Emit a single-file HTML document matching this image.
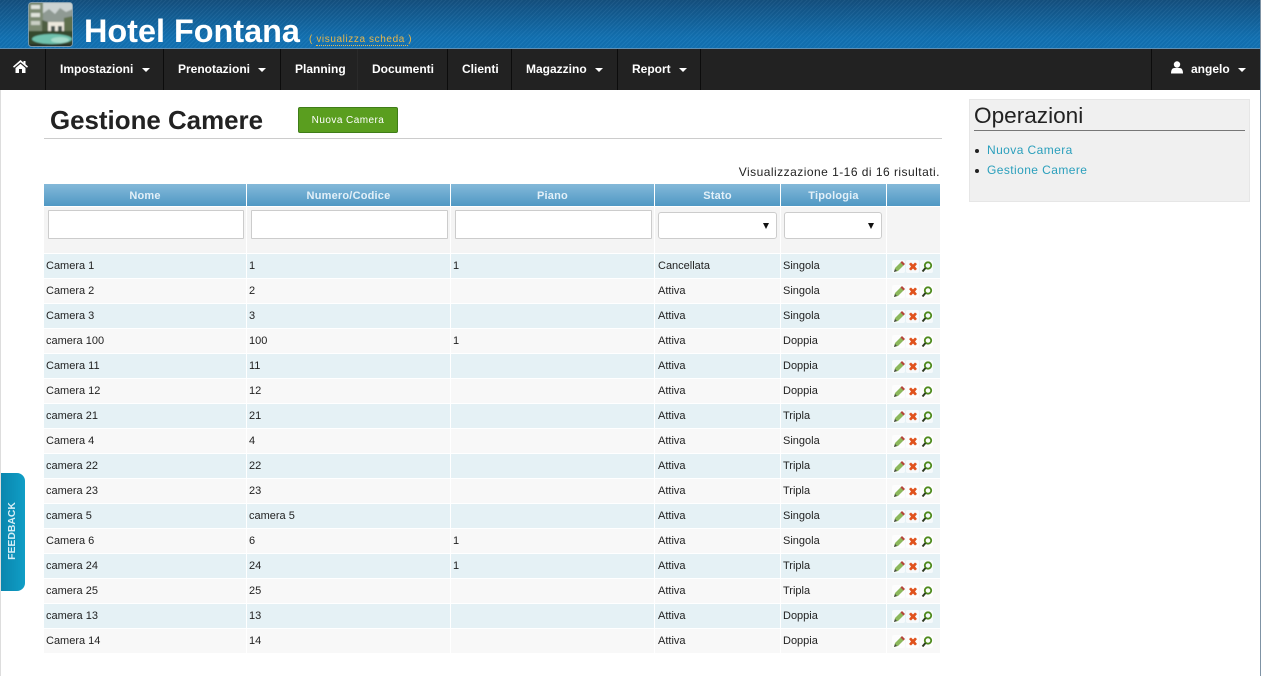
<!DOCTYPE html>
<html lang="it">
<head>
<meta charset="utf-8">
<title>Gestione Camere</title>
<style>
html,body{margin:0;padding:0;width:1263px;height:676px;overflow:hidden;background:#fff;font-family:"Liberation Sans",Arial,sans-serif;color:#222}
.abs{position:absolute}
#hdr{left:0;top:0;width:1260px;height:48px;background:linear-gradient(#14507f,#1272b4 80%,#1272b4);}
#hdr:after{content:"";position:absolute;left:0;top:0;right:0;bottom:0;background:repeating-linear-gradient(135deg,rgba(255,255,255,.045) 0 1px,rgba(0,0,0,.03) 1px 3px)}
#line{left:0;top:48px;width:1260px;height:1px;background:#5d8fb5}
#nav{left:0;top:49px;width:1260px;height:41px;background:#222}
.sep{position:absolute;top:0;width:1px;height:41px;background:#0c0c0c}
.ni{position:absolute;top:13px;font-size:12px;font-weight:bold;color:#fff;line-height:14px;white-space:nowrap}
.car{position:absolute;top:19px;width:0;height:0;border-left:4px solid transparent;border-right:4px solid transparent;border-top:4px solid #fff}
#title{left:84px;top:12px;font-size:32.4px;line-height:38px;font-weight:bold;color:#fff;white-space:nowrap;z-index:2}
#sub{left:309px;top:34px;font-size:10px;line-height:12px;color:#e8b64a;white-space:nowrap;letter-spacing:.6px;z-index:2}
#sub span{border-bottom:1px dotted #e8b64a}
#h1{left:50px;top:106px;font-size:25.9px;line-height:30px;font-weight:bold;color:#222;white-space:nowrap}
#btn{left:298px;top:107px;width:98px;height:24px;background:#5a9e1f;border:1px solid #3f7d18;border-radius:2px;color:#fff;font-size:10px;line-height:25px;text-align:center;letter-spacing:.45px}
#hr{left:44px;top:138px;width:898px;height:1px;background:#ccc}
#res{right:323px;top:165px;font-size:12px;line-height:15px;white-space:nowrap;letter-spacing:.47px}
table{position:absolute;left:43px;top:183px;border-collapse:separate;border-spacing:1px;table-layout:fixed;width:897px}
th{height:20px;padding:2px 0 0;background:linear-gradient(#84b9d9,#4f98c4);color:#e3f0f8;font-size:11px;line-height:20px;text-align:center;font-weight:bold;letter-spacing:.2px}
td{padding:0 0 0 2px;font-size:11px;line-height:24px;height:24px;white-space:nowrap;overflow:hidden}
td:nth-child(4){padding-left:3px}
tr.f td{height:46px;background:#f4f4f4;padding:0;position:relative}
tr.o td{background:#e5f1f5}
tr.e td{background:#f8f8f8}
.inp{position:absolute;left:4px;top:3px;height:27px;background:#fff;border:1px solid #ccc;border-radius:1px}
.sel{position:absolute;left:3px;top:5px;height:25px;background:#fff;border:1px solid #ccc;border-radius:3px}
.sel:after{content:"";position:absolute;right:7px;top:10px;border-left:3.5px solid transparent;border-right:3.5px solid transparent;border-top:6px solid #111}
td svg{display:block;margin:2px 0 0 3px}
#side{left:969px;top:99px;width:279px;height:101px;background:#f0f0f0;border:1px solid #e6e6e6}
#op{left:974px;top:102px;font-size:22.6px;line-height:27px;color:#222;white-space:nowrap}
#oph{left:974px;top:130px;width:271px;height:1px;background:#777}
.lnk{position:absolute;left:987px;font-size:12px;line-height:15px;color:#2a9fbc;white-space:nowrap;letter-spacing:.42px}
.dot{position:absolute;left:975px;width:4px;height:4px;border-radius:50%;background:#222}
#fb{left:1px;top:473px;width:24px;height:118px;background:linear-gradient(90deg,#0a86ae,#109ec6);border-radius:0 8px 8px 0}
#fbt{left:13px;top:531px;transform:translate(-50%,-50%) rotate(-90deg);font-size:10.4px;line-height:12px;font-weight:bold;color:#d6eef6;white-space:nowrap}
#bl{left:0;top:90px;width:1px;height:586px;background:#ddd}
#br{left:1260px;top:0;width:1px;height:676px;background:#7f93a5}
</style>
</head>
<body>
<svg width="0" height="0" style="position:absolute">
<symbol id="ic" viewBox="0 0 44 14">
<rect x="0" y="0" width="13" height="13" rx="2" fill="#fff" opacity=".65"/>
<path d="M2 12l1-4 6-6 3 3-6 6z" fill="#8cb85c"/><path d="M8.5 2.5l1.500-1.500 3 3-1.500 1.500z" fill="#b5443a"/><path d="M2 12l1-3 2 2z" fill="#444"/>
<rect x="14" y="0" width="13" height="13" rx="2" fill="#fff" opacity=".65"/>
<path d="M17 4l2-1.500 2 2 2-2 2 1.500-2 2.500 2 2.500-2 1.500-2-2-2 2-2-1.500 2-2.500z" fill="#e0521d"/>
<rect x="28" y="0" width="13" height="13" rx="2" fill="#fff" opacity=".65"/>
<circle cx="36" cy="5.500" r="3.200" fill="none" stroke="#4e8a1c" stroke-width="1.800"/><path d="M33.500 8l-3 3.500" stroke="#2c3a20" stroke-width="2"/>
</symbol>
</svg>

<div id="hdr" class="abs"></div>
<svg class="abs" style="left:28px;top:2px;z-index:2" width="45" height="45" viewBox="0 0 45 45">
<defs><filter id="b" x="0" y="0" width="100%" height="100%"><feGaussianBlur stdDeviation=".7"/></filter><clipPath id="c"><rect x="0.500" y="0.500" width="44" height="44" rx="3"/></clipPath></defs>
<g clip-path="url(#c)"><g filter="url(#b)">
<rect width="45" height="45" fill="#b8c2c0"/>
<rect x="14" y="1" width="31" height="12" fill="#ccd3d2"/>
<path d="M14 12l7-5 6 5 5-6 6 4 7-3v18H14z" fill="#8f9a93"/>
<rect x="0" y="0" width="15" height="30" fill="#7c8a72"/>
<rect x="3" y="3" width="9" height="4" fill="#dfe3dc"/><rect x="3" y="11" width="9" height="4" fill="#dfe3dc"/><rect x="3" y="19" width="9" height="4" fill="#c9cfc4"/>
<path d="M14 18l6 2v10H14z" fill="#4f5e42"/><path d="M36 16l9-2v16H36z" fill="#5e6f4e"/>
<rect x="20" y="20" width="16" height="14" fill="#ece9dd"/><rect x="23" y="24" width="4" height="8" fill="#48544f"/><rect x="30" y="24" width="4" height="8" fill="#48544f"/>
<rect x="0" y="29" width="45" height="16" fill="#34482f"/>
<ellipse cx="24" cy="37" rx="20" ry="5" fill="#6fc2ae"/><ellipse cx="32" cy="38" rx="9" ry="3" fill="#a6dccb"/>
<rect x="0" y="42" width="45" height="3" fill="#27332a"/>
</g></g>
<rect x="0.500" y="0.500" width="44" height="44" rx="3" fill="none" stroke="#9fb0bb" stroke-opacity=".7"/>
</svg>
<div id="title" class="abs">Hotel Fontana</div>
<div id="sub" class="abs">( <span>visualizza scheda </span>)</div>
<div id="line" class="abs"></div>
<div id="nav" class="abs">
<svg style="position:absolute;left:13px;top:11px" width="15" height="13" viewBox="0 0 15 13"><path d="M7.500 0L0 6.500l1 1.200L7.500 2.300 14 7.700l1-1.200-2.500-2.200V1h-2v1.600zM2.500 8v5h3.500V9h3v4h3.500V8L7.500 3.800z" fill="#fff"/></svg>
<div class="sep" style="left:45px"></div>
<div class="ni" style="left:60px">Impostazioni</div><div class="car" style="left:142px"></div>
<div class="sep" style="left:163px"></div>
<div class="ni" style="left:178px">Prenotazioni</div><div class="car" style="left:258px"></div>
<div class="sep" style="left:280px"></div>
<div class="ni" style="left:295px">Planning</div>
<div class="sep" style="left:357px;background:#2a2a2a"></div>
<div class="ni" style="left:372px">Documenti</div>
<div class="sep" style="left:447px"></div>
<div class="ni" style="left:462px">Clienti</div>
<div class="sep" style="left:511px"></div>
<div class="ni" style="left:526px">Magazzino</div><div class="car" style="left:595px"></div>
<div class="sep" style="left:617px"></div>
<div class="ni" style="left:632px">Report</div><div class="car" style="left:679px"></div>
<div class="sep" style="left:700px"></div>
<div class="sep" style="left:1151px"></div>
<svg style="position:absolute;left:1171px;top:12px" width="12" height="13" viewBox="0 0 12 13"><circle cx="6" cy="3.500" r="3.200" fill="#fff"/><path d="M0 12.500c0-4 1.500-5.500 3.500-5.500h5c2 0 3.500 1.500 3.500 5.500z" fill="#fff"/></svg>
<div class="ni" style="left:1191px">angelo</div><div class="car" style="left:1238px"></div>
</div>
<div id="bl" class="abs"></div>
<div id="br" class="abs"></div>

<div id="h1" class="abs">Gestione Camere</div>
<div id="btn" class="abs">Nuova Camera</div>
<div id="hr" class="abs"></div>
<div id="res" class="abs">Visualizzazione 1-16 di 16 risultati.</div>

<table>
<colgroup><col style="width:202px"><col style="width:203px"><col style="width:203px"><col style="width:125px"><col style="width:105px"><col style="width:53px"></colgroup>
<tr><th>Nome</th><th>Numero/Codice</th><th>Piano</th><th>Stato</th><th>Tipologia</th><th></th></tr>
<tr class="f"><td><div class="inp" style="width:194px"></div></td><td><div class="inp" style="width:195px"></div></td><td><div class="inp" style="width:195px"></div></td><td><div class="sel" style="width:117px"></div></td><td><div class="sel" style="width:96px"></div></td><td></td></tr>
<tr class="o"><td>Camera 1</td><td>1</td><td>1</td><td>Cancellata</td><td>Singola</td><td><svg width="44" height="14"><use href="#ic"/></svg></td></tr>
<tr class="e"><td>Camera 2</td><td>2</td><td></td><td>Attiva</td><td>Singola</td><td><svg width="44" height="14"><use href="#ic"/></svg></td></tr>
<tr class="o"><td>Camera 3</td><td>3</td><td></td><td>Attiva</td><td>Singola</td><td><svg width="44" height="14"><use href="#ic"/></svg></td></tr>
<tr class="e"><td>camera 100</td><td>100</td><td>1</td><td>Attiva</td><td>Doppia</td><td><svg width="44" height="14"><use href="#ic"/></svg></td></tr>
<tr class="o"><td>Camera 11</td><td>11</td><td></td><td>Attiva</td><td>Doppia</td><td><svg width="44" height="14"><use href="#ic"/></svg></td></tr>
<tr class="e"><td>Camera 12</td><td>12</td><td></td><td>Attiva</td><td>Doppia</td><td><svg width="44" height="14"><use href="#ic"/></svg></td></tr>
<tr class="o"><td>camera 21</td><td>21</td><td></td><td>Attiva</td><td>Tripla</td><td><svg width="44" height="14"><use href="#ic"/></svg></td></tr>
<tr class="e"><td>Camera 4</td><td>4</td><td></td><td>Attiva</td><td>Singola</td><td><svg width="44" height="14"><use href="#ic"/></svg></td></tr>
<tr class="o"><td>camera 22</td><td>22</td><td></td><td>Attiva</td><td>Tripla</td><td><svg width="44" height="14"><use href="#ic"/></svg></td></tr>
<tr class="e"><td>camera 23</td><td>23</td><td></td><td>Attiva</td><td>Tripla</td><td><svg width="44" height="14"><use href="#ic"/></svg></td></tr>
<tr class="o"><td>camera 5</td><td>camera 5</td><td></td><td>Attiva</td><td>Singola</td><td><svg width="44" height="14"><use href="#ic"/></svg></td></tr>
<tr class="e"><td>Camera 6</td><td>6</td><td>1</td><td>Attiva</td><td>Singola</td><td><svg width="44" height="14"><use href="#ic"/></svg></td></tr>
<tr class="o"><td>camera 24</td><td>24</td><td>1</td><td>Attiva</td><td>Tripla</td><td><svg width="44" height="14"><use href="#ic"/></svg></td></tr>
<tr class="e"><td>camera 25</td><td>25</td><td></td><td>Attiva</td><td>Tripla</td><td><svg width="44" height="14"><use href="#ic"/></svg></td></tr>
<tr class="o"><td>camera 13</td><td>13</td><td></td><td>Attiva</td><td>Doppia</td><td><svg width="44" height="14"><use href="#ic"/></svg></td></tr>
<tr class="e"><td>Camera 14</td><td>14</td><td></td><td>Attiva</td><td>Doppia</td><td><svg width="44" height="14"><use href="#ic"/></svg></td></tr>
</table>

<div id="side" class="abs"></div>
<div id="op" class="abs">Operazioni</div>
<div id="oph" class="abs"></div>
<div class="dot" style="top:149px"></div><div class="lnk" style="top:143px">Nuova Camera</div>
<div class="dot" style="top:169px"></div><div class="lnk" style="top:163px">Gestione Camere</div>

<div id="fb" class="abs"></div>
<div id="fbt" class="abs">FEEDBACK</div>
</body>
</html>
